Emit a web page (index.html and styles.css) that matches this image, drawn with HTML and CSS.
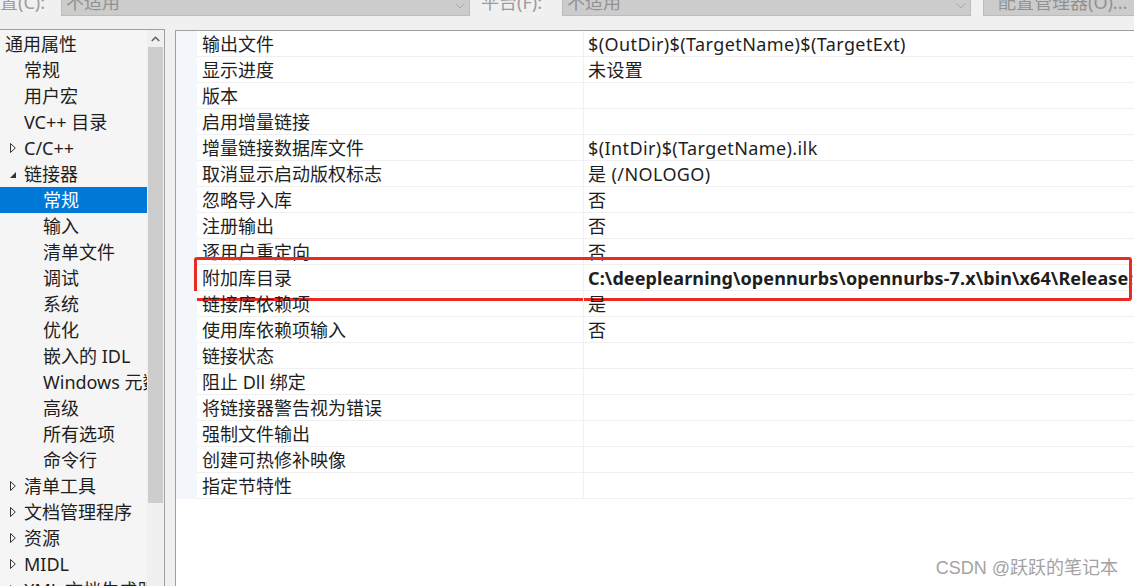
FILE: index.html
```html
<!DOCTYPE html>
<html lang="zh-CN">
<head>
    <meta charset="UTF-8">
    <title>链接器 - 常规</title>
    <link rel="stylesheet" href="styles.css">
</head>
<body>
<div class="toolbar">
    <div class="tb-label lbl-config">配置(C):</div>
    <div class="combo">
        <span>不适用</span>
        <svg class="chevron" width="10" height="6" viewBox="0 0 10 6"><path d="M0.5 0.5 L5 5 L9.5 0.5" fill="none" stroke="#a8a8a8" stroke-width="1"/></svg>
    </div>
    <div class="tb-label lbl-platform">平台(F):</div>
    <div class="combo">
        <span>不适用</span>
        <svg class="chevron" width="10" height="6" viewBox="0 0 10 6"><path d="M0.5 0.5 L5 5 L9.5 0.5" fill="none" stroke="#a8a8a8" stroke-width="1"/></svg>
    </div>
    <div class="tb-button">配置管理器(O)...</div>
</div>

<div class="main">
    <div class="tree-panel">
        <ul class="tree">
            <li class="lv0">通用属性</li>
            <li class="lv1">常规</li>
            <li class="lv1">用户宏</li>
            <li class="lv1">VC++ 目录</li>
            <li class="lv1 node"><svg class="arrow" width="6" height="10" viewBox="0 0 6 10"><path d="M0.5 0.5 L5.3 5 L0.5 9.5 Z" fill="none" stroke="#333" stroke-width="1"/></svg>C/C++</li>
            <li class="lv1 node"><svg class="arrow" width="6" height="10" viewBox="0 0 6 10"><path d="M6 3 L6 9 L0 9 Z" fill="#333"/></svg>链接器</li>
            <li class="lv2 selected">常规</li>
            <li class="lv2">输入</li>
            <li class="lv2">清单文件</li>
            <li class="lv2">调试</li>
            <li class="lv2">系统</li>
            <li class="lv2">优化</li>
            <li class="lv2">嵌入的 IDL</li>
            <li class="lv2">Windows 元数据</li>
            <li class="lv2">高级</li>
            <li class="lv2">所有选项</li>
            <li class="lv2">命令行</li>
            <li class="lv1 node"><svg class="arrow" width="6" height="10" viewBox="0 0 6 10"><path d="M0.5 0.5 L5.3 5 L0.5 9.5 Z" fill="none" stroke="#333" stroke-width="1"/></svg>清单工具</li>
            <li class="lv1 node"><svg class="arrow" width="6" height="10" viewBox="0 0 6 10"><path d="M0.5 0.5 L5.3 5 L0.5 9.5 Z" fill="none" stroke="#333" stroke-width="1"/></svg>文档管理程序</li>
            <li class="lv1 node"><svg class="arrow" width="6" height="10" viewBox="0 0 6 10"><path d="M0.5 0.5 L5.3 5 L0.5 9.5 Z" fill="none" stroke="#333" stroke-width="1"/></svg>资源</li>
            <li class="lv1 node"><svg class="arrow" width="6" height="10" viewBox="0 0 6 10"><path d="M0.5 0.5 L5.3 5 L0.5 9.5 Z" fill="none" stroke="#333" stroke-width="1"/></svg>MIDL</li>
            <li class="lv1 node"><svg class="arrow" width="6" height="10" viewBox="0 0 6 10"><path d="M0.5 0.5 L5.3 5 L0.5 9.5 Z" fill="none" stroke="#333" stroke-width="1"/></svg>XML 文档生成器</li>
        </ul>
        <div class="vscroll">
            <div class="scroll-btn">
                <svg width="9" height="6" viewBox="0 0 9 6"><path d="M0.8 5 L4.5 1.3 L8.2 5" fill="none" stroke="#606060" stroke-width="1.6"/></svg>
            </div>
            <div class="thumb"></div>
        </div>
    </div>

    <div class="grid-panel">
        <div class="grid">
            <div class="prop-row"><div class="gutter"></div><div class="name">输出文件</div><div class="value">$(OutDir)$(TargetName)$(TargetExt)</div></div>
            <div class="prop-row"><div class="gutter"></div><div class="name">显示进度</div><div class="value">未设置</div></div>
            <div class="prop-row"><div class="gutter"></div><div class="name">版本</div><div class="value"></div></div>
            <div class="prop-row"><div class="gutter"></div><div class="name">启用增量链接</div><div class="value"></div></div>
            <div class="prop-row"><div class="gutter"></div><div class="name">增量链接数据库文件</div><div class="value">$(IntDir)$(TargetName).ilk</div></div>
            <div class="prop-row"><div class="gutter"></div><div class="name">取消显示启动版权标志</div><div class="value">是 (/NOLOGO)</div></div>
            <div class="prop-row"><div class="gutter"></div><div class="name">忽略导入库</div><div class="value">否</div></div>
            <div class="prop-row"><div class="gutter"></div><div class="name">注册输出</div><div class="value">否</div></div>
            <div class="prop-row"><div class="gutter"></div><div class="name">逐用户重定向</div><div class="value">否</div></div>
            <div class="prop-row marked">
                <div class="gutter"></div><div class="name">附加库目录</div><div class="value bold">C:\deeplearning\opennurbs\opennurbs-7.x\bin\x64\Release;</div>
                <div class="red-box"></div>
            </div>
            <div class="prop-row"><div class="gutter"></div><div class="name">链接库依赖项</div><div class="value">是</div></div>
            <div class="prop-row"><div class="gutter"></div><div class="name">使用库依赖项输入</div><div class="value">否</div></div>
            <div class="prop-row"><div class="gutter"></div><div class="name">链接状态</div><div class="value"></div></div>
            <div class="prop-row"><div class="gutter"></div><div class="name">阻止 Dll 绑定</div><div class="value"></div></div>
            <div class="prop-row"><div class="gutter"></div><div class="name">将链接器警告视为错误</div><div class="value"></div></div>
            <div class="prop-row"><div class="gutter"></div><div class="name">强制文件输出</div><div class="value"></div></div>
            <div class="prop-row"><div class="gutter"></div><div class="name">创建可热修补映像</div><div class="value"></div></div>
            <div class="prop-row"><div class="gutter"></div><div class="name">指定节特性</div><div class="value"></div></div>
        </div>
    </div>
</div>

<div class="watermark">CSDN @跃跃的笔记本</div>
</body>
</html>
```

FILE: styles.css
```css
html, body {
    margin: 0;
    height: 100%;
    overflow: hidden;
}

body {
    background-color: #f0f0f0;
    font-family: "Noto Sans", "Noto Sans CJK SC", sans-serif;
    font-size: 18px;
    color: #1e1e1e;
}

/* top strip, cut off by the window edge */
.toolbar {
    display: flex;
    height: 29px;
    overflow: hidden;
}

.toolbar > div {
    flex-shrink: 0;
}

.tb-label {
    height: 28px;
    margin-top: -12px;
    line-height: 28px;
    color: #9c9c9c;
    white-space: nowrap;
    overflow: hidden;
    display: flex;
}

.lbl-config {
    width: 61px;
    justify-content: flex-end;
    padding-right: 16px;
    box-sizing: border-box;
}

.lbl-platform {
    width: 92px;
    padding-left: 11px;
    box-sizing: border-box;
}

.combo {
    width: 409px;
    height: 28px;
    margin-top: -12px;
    box-sizing: border-box;
    background-color: #cccccc;
    border: 1px solid #bcbcbc;
    color: #929292;
    line-height: 26px;
    padding-left: 4px;
    display: flex;
    justify-content: space-between;
    align-items: center;
}

.chevron {
    margin-right: 4px;
    margin-top: 8px;
}

.tb-button {
    width: 170px;
    height: 28px;
    margin-top: -12px;
    margin-left: 12px;
    box-sizing: border-box;
    background-color: #cccccc;
    border: 1px solid #bcbcbc;
    color: #929292;
    line-height: 26px;
    padding-left: 14px;
    white-space: nowrap;
}

.main {
    display: flex;
    align-items: flex-start;
    height: 557px;
}

/* left tree */
.tree-panel {
    width: 165px;
    height: 100%;
    box-sizing: border-box;
    border-top: 1px solid #a0a0a0;
    border-right: 1px solid #a0a0a0;
    background-color: #f5f5f5;
    display: flex;
    flex-shrink: 0;
}

.tree {
    list-style: none;
    margin: 0;
    padding: 1px 0 0 0;
    width: 147px;
    overflow: hidden;
}

.tree li {
    height: 26px;
    line-height: 26px;
    white-space: nowrap;
    display: flex;
    align-items: center;
}

.tree .lv0 { padding-left: 5px; }
.tree .lv1 { padding-left: 24px; }
.tree .lv2 { padding-left: 43px; }
.tree .node { padding-left: 10px; }

.arrow {
    margin-right: 8px;
    flex-shrink: 0;
}

.tree .selected {
    background-color: #0078d7;
    color: #fff;
}

.vscroll {
    width: 17px;
    background-color: #f0f0f0;
    display: flex;
    flex-direction: column;
    align-items: center;
}

.scroll-btn {
    height: 17px;
    display: flex;
    align-items: center;
    justify-content: center;
}

.thumb {
    width: 15px;
    height: 456px;
    background-color: #cdcdcd;
}

/* property grid */
.grid-panel {
    flex: 0 0 1000px;
    height: 100%;
    margin-top: 1px;
    margin-left: 10px;
    box-sizing: border-box;
    border-top: 1px solid #a0a0a0;
    border-left: 1px solid #a0a0a0;
    background-color: #fff;
}

.prop-row {
    display: flex;
    height: 26px;
    position: relative;
}

.gutter {
    width: 21px;
    background-color: #f3f6fb;
    flex-shrink: 0;
}

.name,
.value {
    box-sizing: border-box;
    padding-top: 2px;
    line-height: 23px;
    border-bottom: 1px solid #f0f0f0;
    white-space: nowrap;
}

.name {
    width: 387px;
    padding-left: 5px;
    border-right: 1px solid #f0f0f0;
    flex-shrink: 0;
}

.value {
    flex: 1;
    padding-left: 4px;
    overflow: hidden;
    letter-spacing: 0.4px;
}

.value.bold {
    font-weight: bold;
    letter-spacing: 0.1px;
}

.red-box {
    position: absolute;
    top: -8px;
    left: 18px;
    width: 938px;
    height: 44px;
    box-sizing: border-box;
    border: 3px solid #ea2a20;
    border-radius: 3px;
}

.watermark {
    position: absolute;
    right: 16px;
    bottom: 7px;
    color: #a3a3a3;
    font-family: "Liberation Sans", "Noto Sans CJK SC", sans-serif;
    font-size: 18px;
    text-shadow: 0 0 1px #fff;
}
```
